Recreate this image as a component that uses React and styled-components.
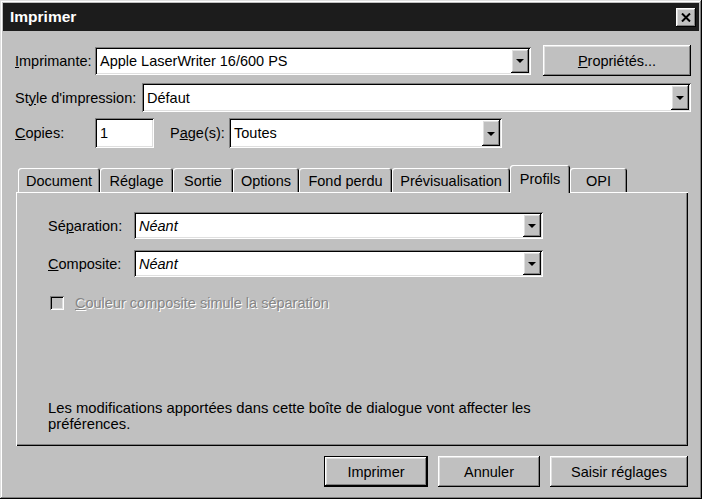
import styled, { createGlobalStyle } from "styled-components";

const GlobalStyle = createGlobalStyle`
  html, body {
    margin: 0;
    padding: 0;
    background: #fff;
  }
  body {
    font-family: "Liberation Sans", Arial, sans-serif;
    font-size: 14.5px;
    color: #000;
  }
`;

const raised = `
  box-shadow: inset -1px -1px #000, inset 1px 1px #fff,
    inset -2px -2px #808080, inset 2px 2px #dfdfdf;
`;

const sunken = `
  box-shadow: inset 1px 1px #808080, inset -1px -1px #fff,
    inset 2px 2px #000, inset -2px -2px #dfdfdf;
`;

const Window = styled.div`
  width: 702px;
  height: 499px;
  box-sizing: border-box;
  padding: 3px;
  background: #c0c0c0;
  box-shadow: inset -1px -1px #000, inset 1px 1px #dfdfdf,
    inset -2px -2px #808080, inset 2px 2px #fff;
  display: flex;
  flex-direction: column;
`;

const TitleBar = styled.div`
  height: 28px;
  flex-shrink: 0;
  background: #1c1c1c;
  display: flex;
  align-items: center;
  justify-content: space-between;
  padding: 0 3px 0 7px;
`;

const Title = styled.span`
  color: #fff;
  font-weight: bold;
  font-size: 15.5px;
`;

const CloseButton = styled.div`
  width: 20px;
  height: 19px;
  background: #c0c0c0;
  ${raised}
  display: flex;
  align-items: center;
  justify-content: center;
`;

const Content = styled.div`
  flex: 1;
  display: flex;
  flex-direction: column;
  padding: 14px 8px 12px 12px;
`;

const Row = styled.div`
  display: flex;
  align-items: center;
  height: ${(p) => p.$h}px;
  margin-top: ${(p) => p.$mt || 0}px;
`;

const Label = styled.span`
  width: ${(p) => p.$w}px;
  margin-left: ${(p) => p.$ml || 0}px;
  flex-shrink: 0;
  white-space: nowrap;
  color: ${(p) => (p.$disabled ? "#868686" : "#000")};
  text-shadow: ${(p) => (p.$disabled ? "1px 1px #fff" : "none")};
`;

const U = styled.span`
  text-decoration: underline;
`;

const Field = styled.div`
  width: ${(p) => (p.$w ? `${p.$w}px` : "auto")};
  flex: ${(p) => (p.$w ? "none" : "1")};
  height: 100%;
  box-sizing: border-box;
  background: #fff;
  ${sunken}
  padding: 2px;
  display: flex;
  align-items: center;
`;

const Value = styled.span`
  flex: 1;
  padding-left: 3px;
  white-space: nowrap;
  font-style: ${(p) => (p.$italic ? "italic" : "normal")};
`;

const ArrowButton = styled.div`
  width: 18px;
  height: 100%;
  box-sizing: border-box;
  background: #c0c0c0;
  ${raised}
  display: flex;
  align-items: center;
  justify-content: center;
  &::after {
    content: "";
    border-left: 4px solid transparent;
    border-right: 4px solid transparent;
    border-top: 4px solid #000;
    margin-top: 1px;
  }
`;

const Button = styled.div`
  width: ${(p) => p.$w}px;
  height: 31px;
  box-sizing: border-box;
  background: #c0c0c0;
  display: flex;
  align-items: center;
  justify-content: center;
  white-space: nowrap;
  border: ${(p) => (p.$default ? "1px solid #000" : "none")};
  ${raised}
`;

const TabStrip = styled.div`
  display: flex;
  align-items: flex-end;
  height: 27px;
  margin-top: 17px;
  padding-left: 3px;
`;

const Tab = styled.div`
  width: ${(p) => p.$w}px;
  height: ${(p) => (p.$active ? 28 : 24)}px;
  margin-bottom: ${(p) => (p.$active ? -1 : 0)}px;
  position: relative;
  z-index: ${(p) => (p.$active ? 1 : 0)};
  box-sizing: border-box;
  background: #c0c0c0;
  border-radius: 3px 3px 0 0;
  box-shadow: inset 1px 1px #fff, inset -1px 0 #000, inset -2px 0 #808080;
  display: flex;
  align-items: center;
  justify-content: center;
  padding-top: ${(p) => (p.$active ? 0 : 2)}px;
  white-space: nowrap;
`;

const Panel = styled.div`
  height: 254px;
  margin-left: 1px;
  margin-right: 3px;
  box-sizing: border-box;
  box-shadow: inset 1px 1px #fff, inset -1px -1px #000, inset -2px -2px #808080;
  padding: 20px 0 14px 32px;
  display: flex;
  flex-direction: column;
`;

const CheckBox = styled.div`
  width: 14px;
  height: 14px;
  margin-left: 2px;
  margin-right: 11px;
  box-sizing: border-box;
  background: #c0c0c0;
  ${sunken}
`;

const Note = styled.p`
  margin: auto 0 0;
  width: 520px;
  font-size: 14.8px;
  line-height: 16px;
`;

const Footer = styled.div`
  display: flex;
  justify-content: flex-end;
  gap: 10px;
  margin-top: 10px;
  padding-right: 3px;
`;

const tabs = [
  ["Document", 82],
  ["Réglage", 73],
  ["Sortie", 60],
  ["Options", 66],
  ["Fond perdu", 93],
  ["Prévisualisation", 118],
  ["Profils", 60],
  ["OPI", 57],
];

function Select({ value, width, italic }) {
  return (
    <Field $w={width}>
      <Value $italic={italic}>{value}</Value>
      <ArrowButton />
    </Field>
  );
}

export default function App() {
  return (
    <>
      <GlobalStyle />
      <Window>
        <TitleBar>
          <Title>Imprimer</Title>
          <CloseButton>
            <svg width="10" height="9" viewBox="0 0 10 9">
              <path d="M1 0.5 L9 8.5 M9 0.5 L1 8.5" stroke="#000" strokeWidth="2" />
            </svg>
          </CloseButton>
        </TitleBar>
        <Content>
          <Row $h={31}>
            <Label $w={80}>
              <U>I</U>mprimante:
            </Label>
            <Field $w={436} style={{ height: 28 }}>
              <Value>Apple LaserWriter 16/600 PS</Value>
              <ArrowButton />
            </Field>
            <Label $w={12} />
            <Button $w={148}>
              <U>P</U>ropriétés...
            </Button>
          </Row>
          <Row $h={29} $mt={7}>
            <Label $w={127}>
              St<U>y</U>le d'impression:
            </Label>
            <Select value="Défaut" />
          </Row>
          <Row $h={30} $mt={6}>
            <Label $w={80}>
              <U>C</U>opies:
            </Label>
            <Field $w={59}>
              <Value>1</Value>
            </Field>
            <Label $w={59} $ml={16}>
              P<U>a</U>ge(s):
            </Label>
            <Select value="Toutes" width={273} />
          </Row>
          <TabStrip>
            {tabs.map(([name, w]) => (
              <Tab key={name} $w={w} $active={name === "Profils"}>
                {name}
              </Tab>
            ))}
          </TabStrip>
          <Panel>
            <Row $h={27}>
              <Label $w={86}>
                Sé<U>p</U>aration:
              </Label>
              <Select value="Néant" width={409} italic />
            </Row>
            <Row $h={27} $mt={11}>
              <Label $w={86}>
                <U>C</U>omposite:
              </Label>
              <Select value="Néant" width={409} italic />
            </Row>
            <Row $h={16} $mt={18}>
              <CheckBox />
              <Label $disabled>
                <U>C</U>ouleur composite simule la séparation
              </Label>
            </Row>
            <Note>
              Les modifications apportées dans cette boîte de dialogue vont
              affecter les préférences.
            </Note>
          </Panel>
          <Footer>
            <Button $w={104} $default>
              Imprimer
            </Button>
            <Button $w={102}>Annuler</Button>
            <Button $w={138}>Saisir réglages</Button>
          </Footer>
        </Content>
      </Window>
    </>
  );
}
